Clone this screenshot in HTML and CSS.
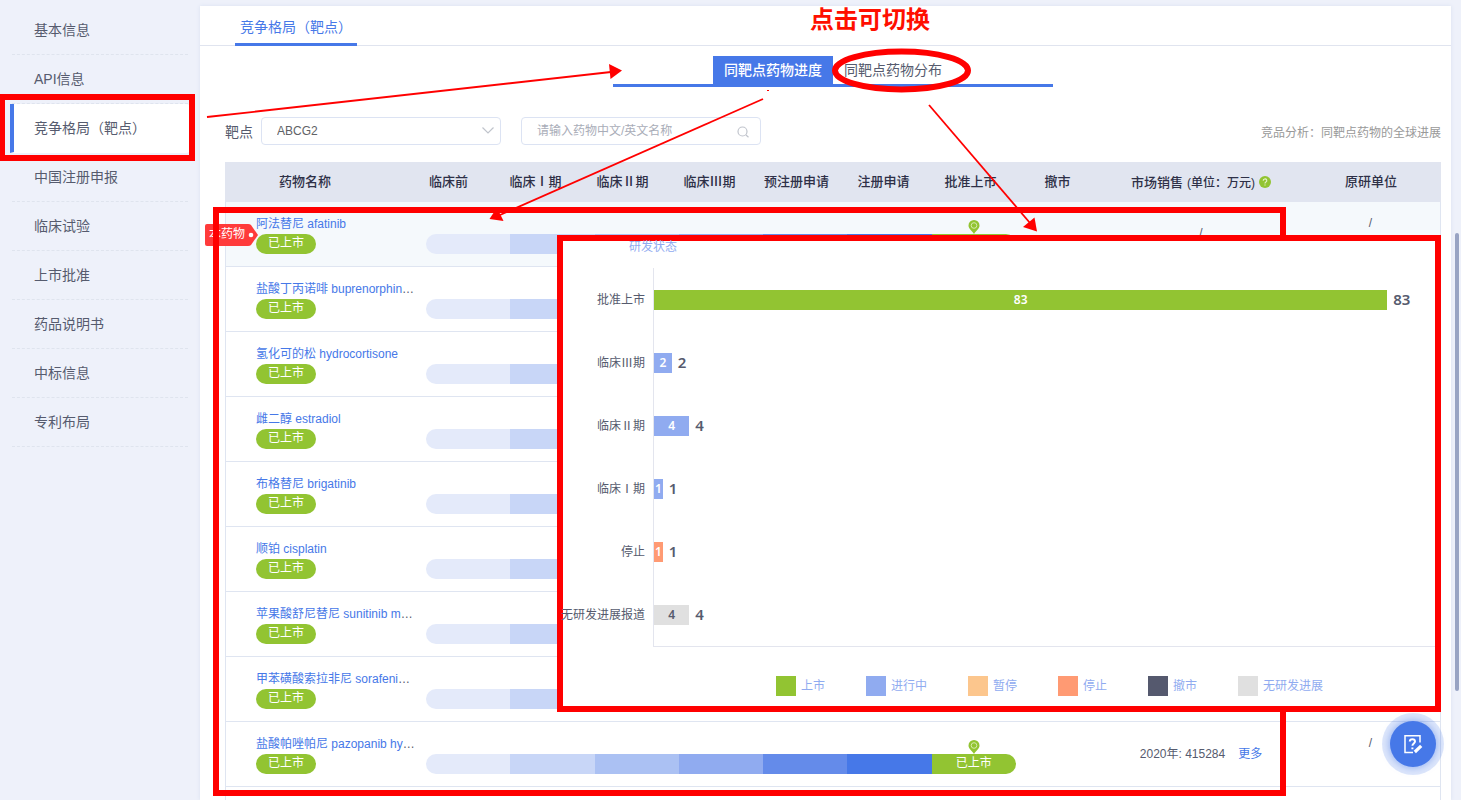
FILE: index.html
```html
<!DOCTYPE html>
<html lang="zh-CN">
<head>
<meta charset="utf-8">
<title>竞争格局（靶点）</title>
<link rel="stylesheet" href="styles.css">
</head>
<body>
<div class="page">
  <nav class="sidebar">
    <a class="side-item" href="#">基本信息</a>
    <a class="side-item" href="#">API信息</a>
    <a class="side-item side-item-active" href="#">竞争格局（靶点）</a>
    <a class="side-item" href="#">中国注册申报</a>
    <a class="side-item" href="#">临床试验</a>
    <a class="side-item" href="#">上市批准</a>
    <a class="side-item" href="#">药品说明书</a>
    <a class="side-item" href="#">中标信息</a>
    <a class="side-item" href="#">专利布局</a>
  </nav>

  <main class="main">
    <header class="main-head"><h1 class="main-tab">竞争格局（靶点）</h1></header>
    <div class="content">
      <div class="switch">
        <button class="switch-btn switch-btn-on" type="button">同靶点药物进度</button>
        <button class="switch-btn" type="button">同靶点药物分布</button>
      </div>

      <div class="filters">
        <label class="filter-label" for="target">靶点</label>
        <div class="field">
          <select id="target" class="control"><option>ABCG2</option></select>
          <svg class="field-icon" width="14" height="14" viewBox="0 0 14 14" fill="none" stroke="#c0c4cc" stroke-width="1.2"><path d="M1.500 3.500 7 9l5.500-5.500"/></svg>
        </div>
        <div class="field">
          <input id="keyword" class="control" type="text" placeholder="请输入药物中文/英文名称" aria-label="药物名称">
          <svg class="field-icon field-icon-search" width="14" height="14" viewBox="0 0 14 14" fill="none" stroke="#c0c4cc" stroke-width="1.2"><circle cx="6.500" cy="6.500" r="4.500"/><path d="m10 10 2.500 2.300"/></svg>
        </div>
        <p class="note">竞品分析：同靶点药物的全球进展</p>
      </div>

      <table class="drugs">
        <colgroup><col class="col-name"><col class="col-stage" span="8"><col class="col-sales"><col class="col-org"></colgroup>
        <thead>
          <tr>
            <th class="th-name">药物名称</th><th>临床前</th><th>临床Ⅰ期</th><th>临床Ⅱ期</th><th>临床Ⅲ期</th><th>预注册申请</th><th>注册申请</th><th>批准上市</th><th>撤市</th>
            <th><span class="th-sales">市场销售 <small class="unit">(单位：万元)</small>
              <svg width="12" height="12" viewBox="0 0 12 12"><circle cx="6" cy="6" r="6" fill="#92c432"/><path d="M4.200 4.700a1.800 1.700 0 1 1 2.700 1.400Q6 6.600 6 7.400M6 8.500v1" fill="none" stroke="#e8f4cf" stroke-width="1.100"/></svg></span></th>
            <th>原研单位</th>
          </tr>
        </thead>
        <tbody id="rows"></tbody>
      </table>
    </div>
  </main>

  <div class="scroll-thumb"></div>

  <button class="fab" type="button" aria-label="反馈">
    <svg width="20" height="20" viewBox="0 0 20 20" fill="none" stroke="#fff" stroke-width="1.500"><path d="M17 8.500V1.800H2v16.700h8"/><path d="M6.800 7.600c0-3.200 5.200-3.200 5.200 0 0 1.900-2.600 1.900-2.600 4.200M9.400 13.400v1.800" stroke-width="2"/><path d="m11.800 18 6.400-6.200" stroke-width="3.200"/></svg>
  </button>

  <div class="mark mark-menu"></div>
  <div class="mark mark-table"></div>

  <section class="chart">
    <h2 class="chart-title">研发状态</h2>
    <div class="plot" id="plot"></div>
    <ul class="legend">
      <li class="legend-item"><i class="swatch green"></i><span>上市</span></li>
      <li class="legend-item"><i class="swatch blue"></i><span>进行中</span></li>
      <li class="legend-item"><i class="swatch amber"></i><span>暂停</span></li>
      <li class="legend-item"><i class="swatch coral"></i><span>停止</span></li>
      <li class="legend-item"><i class="swatch slate"></i><span>撤市</span></li>
      <li class="legend-item"><i class="swatch gray"></i><span>无研发进展</span></li>
    </ul>
  </section>

  <svg class="arrows" width="1461" height="800" viewBox="0 0 1461 800" fill="none" stroke="#f00">
    <g stroke-width="1.800">
      <path d="M207 117 611 72"/><path d="M763 99 500 215"/><path d="m929 105 101 118"/>
    </g>
    <g fill="#f00" stroke="none">
      <path d="m609 64 13 6.500L610.500 79z"/><path d="m489.500 219 7.500-11.500 6.500 13.500z"/><path d="m1037 231.500-14-4.500 11.500-9.500z"/><path d="M767 90h2v1h-2z"/>
    </g>
    <ellipse cx="901.500" cy="70.500" rx="66.500" ry="19" stroke-width="6"/>
  </svg>
  <p class="hint">点击可切换</p>
</div>
<script src="app.js"></script>
</body>
</html>
```
FILE: styles.css
```css
* { box-sizing: border-box; }
body, h1, h2, p, ul { margin: 0; padding: 0; }
body {
  font-family: "Liberation Sans", "Noto Sans CJK SC", sans-serif;
  font-size: 14px;
  color: #565b6e;
  background: #eef1fa;
}
button, input, select { font-family: inherit; }
a { text-decoration: none; }
.page {
  position: relative;
  display: flex;
  height: 100vh;
  overflow: hidden;
}

.sidebar {
  flex: 0 0 200px;
  display: flex;
  flex-direction: column;
  padding: 6px 10px 0;
}
.side-item {
  height: 49px;
  margin: 0 2px;
  padding-left: 22px;
  line-height: 48px;
  color: #565b6e;
  border-bottom: 1px dashed #dfe4ee;
}
.side-item-active {
  margin: 0;
  padding-left: 20px;
  background: #fff;
  border-left: 4px solid #4678e8;
  border-bottom-color: #fff;
  border-radius: 0 4px 4px 0;
}

.main {
  flex: 1;
  min-width: 0;
  margin: 6px 10px 0 0;
  background: #fff;
  box-shadow: 0 0 4px #d9e0f0;
}
.main-head {
  display: flex;
  height: 40px;
  padding-left: 35px;
  border-bottom: 1px solid #e0e4ef;
}
.main-tab {
  height: 40px;
  padding: 0 5px;
  font-size: 14px;
  font-weight: 400;
  line-height: 42px;
  color: #4678e8;
  border-bottom: 3px solid #4678e8;
}
.content { padding: 10px 10px 0 25px; }
.switch {
  display: flex;
  width: 440px;
  height: 31px;
  margin: 0 auto;
  padding: 0 100px;
  border-bottom: 3px solid #4678e8;
}
.switch-btn {
  flex: 1;
  padding: 0 0 2px;
  border: 0;
  background: none;
  font-size: 14px;
  color: #565b6e;
}
.switch-btn-on { background: #4678e8; color: #fff; font-weight: 500; }

.filters {
  display: flex;
  align-items: center;
  height: 28px;
  margin: 30px 0 17px;
}
.filter-label { margin-right: 8px; }
.field { position: relative; width: 240px; margin-right: 20px; }
.control {
  width: 100%;
  height: 28px;
  padding: 0 30px 0 15px;
  border: 1px solid #dce3f3;
  border-radius: 4px;
  background: #fff;
  font-size: 12px;
  color: #606266;
  appearance: none;
}
.control::placeholder { color: #a9adb8; }
.field-icon { position: absolute; right: 6px; top: 7px; }
.field-icon-search { right: 11px; top: 8px; }
.note { margin-left: auto; font-size: 12px; color: #999; }

.drugs {
  width: 100%;
  table-layout: fixed;
  border-collapse: separate;
  border-spacing: 0;
  font-size: 12px;
}
.col-stage { width: 87px; }
.col-sales { width: 200px; }
.col-org { width: 140px; }
.drugs th {
  height: 40px;
  padding: 0 0 3px;
  font-size: 13px;
  font-weight: 500;
  color: #2e3047;
  background: #e1e5f0;
  white-space: nowrap;
}
.drugs .th-name { padding-right: 20px; }
.th-sales { display: flex; align-items: center; justify-content: center; gap: 4px; padding-top: 2px; }
.unit { font-size: 12px; }
.drugs td { height: 65px; padding: 0 0 3px; border-bottom: 1px solid #dfe5f1; text-align: center; }
.drugs td:first-child { border-left: 1px solid #dfe5f1; }
.drugs td:last-child { border-right: 1px solid #dfe5f1; }
.row-current td { background: #f5f9fc; }
.drugs .cell-name { position: relative; padding: 0 0 0 30px; text-align: left; }
.name { height: 20px; line-height: 20px; white-space: nowrap; }
.name a, .more { color: #4678e8; }
.pill {
  display: block;
  width: 60px;
  height: 20px;
  border-radius: 10px;
  background: #92c432;
  color: #fff;
  line-height: 19px;
  text-align: center;
}
.tag {
  position: absolute;
  left: -21px;
  top: 22px;
  width: 53px;
  height: 22px;
}
.tag svg { display: block; }
.tag span { position: absolute; left: 4px; top: 0; color: #fff; line-height: 21px; white-space: nowrap; }
.drugs .cell-progress { padding: 20px 85px 0 21px; }
.progress { display: flex; height: 20px; border-radius: 10px; color: #fff; line-height: 19px; }
.seg { flex: 1; }
.seg-1 { background: #e4eafa; border-radius: 10px 0 0 10px; }
.seg-2 { background: #c8d6f7; }
.seg-3 { background: #abc1f3; }
.seg-4 { background: #90abf0; }
.seg-5 { background: #648bea; }
.seg-6 { background: #4678e8; }
.seg-7 { position: relative; background: #92c432; border-radius: 0 10px 10px 0; }
.pin { position: absolute; left: 50%; bottom: 20px; margin-left: -6px; }
.more { margin-left: 13px; }
.drugs .cell-org { vertical-align: top; padding-top: 14px; }

.scroll-thumb {
  position: absolute;
  right: 2px;
  top: 233px;
  width: 4px;
  height: 458px;
  border-radius: 2px;
  background: #98a3c3;
}
.fab {
  position: absolute;
  right: 25px;
  top: 721px;
  display: flex;
  align-items: center;
  justify-content: center;
  width: 46px;
  height: 46px;
  padding: 0;
  border: 0;
  border-radius: 50%;
  background: #4678e8;
  box-shadow: 0 0 8px rgba(70, 120, 232, .6), 0 0 0 8px rgba(70, 120, 232, .18);
}

.mark { position: absolute; border: 6px solid #f00; }
.mark-menu { left: -1px; top: 94px; width: 196px; height: 67px; }
.mark-table { left: 213px; top: 207px; width: 1073px; height: 589px; }
.arrows { position: absolute; left: 0; top: 0; pointer-events: none; }
.hint {
  position: absolute;
  left: 810px;
  top: 2px;
  font-size: 24px;
  font-weight: 700;
  line-height: 35px;
  color: #ff0f00;
}

.chart {
  position: absolute;
  left: 557px;
  top: 235px;
  width: 884px;
  height: 477px;
  border: 6px solid #f00;
  background: #fff;
  font-size: 12px;
}
.chart-title {
  width: 180px;
  font-size: 12px;
  font-weight: 400;
  line-height: 12px;
  text-align: center;
  color: #90abf0;
}
.plot { margin: 15px 0 0 90px; border-left: 1px solid #e3e5ee; border-bottom: 1px solid #e3e5ee; }
.bar-row { position: relative; display: flex; align-items: center; height: 63px; }
.bar-label { position: absolute; right: 100%; margin-right: 9px; padding-bottom: 2px; white-space: nowrap; }
.bar {
  height: 20px;
  line-height: 19px;
  text-align: center;
  color: #fff;
  font-family: "Noto Sans", sans-serif;
  font-weight: 600;
}
.total { margin-left: 6px; padding-bottom: 2px; font-family: "Noto Sans", sans-serif; font-size: 15px; font-weight: 600; }
.legend {
  display: flex;
  gap: 41px;
  padding: 29px 0 0 213px;
  list-style: none;
  color: #90abf0;
  white-space: nowrap;
}
.legend-item { display: flex; align-items: center; gap: 5px; }
.legend-item span { padding-bottom: 3px; }
.swatch { width: 20px; height: 20px; }
.green { background: #92c432; }
.blue { background: #90abf0; }
.amber { background: #fcc68d; }
.coral { background: #ff9a73; }
.slate { background: #55596e; }
.gray { background: #e0e0e0; }
.bar.gray { color: #565b6e; }
```
FILE: app.js
```js
const drugs = [
  ["阿法替尼 afatinib", false],
  ["盐酸丁丙诺啡 buprenorphin", true],
  ["氢化可的松 hydrocortisone", false],
  ["雌二醇 estradiol", false],
  ["布格替尼 brigatinib", false],
  ["顺铂 cisplatin", false],
  ["苹果酸舒尼替尼 sunitinib m", true],
  ["甲苯磺酸索拉非尼 sorafeni", true],
  ["盐酸帕唑帕尼 pazopanib hy", true, "2020年: 415284"],
  ["", false]
];
const pin = '<svg class="pin" width="12" height="14" viewBox="0 0 12 14"><path d="M6 0a5.500 5.500 0 0 1 5.500 5.500C11.500 9 8 10.500 6 14 4 10.500.5 9 .5 5.500A5.500 5.500 0 0 1 6 0z" fill="#92c432"/><circle cx="6" cy="5.500" r="2.800" fill="none" stroke="#d6eaae"/></svg>';
const tag = '<div class="tag"><svg width="53" height="22" viewBox="0 0 53 22"><path d="M2 0h41q2 0 3 1l7 10-7 10q-1 1-3 1H2q-2 0-2-2V2q0-2 2-2z" fill="#ff3b3b"/><circle cx="46" cy="11" r="2.300" fill="#fff"/></svg><span>本药物</span></div>';
const segs = [1, 2, 3, 4, 5, 6].map(n => `<div class="seg seg-${n}"></div>`).join("");

document.getElementById("rows").innerHTML = drugs.map(([name, cut, sales], i) => name ? `
  <tr class="${i === 0 ? "row-current" : ""}">
    <td class="cell-name"><div class="name"><a href="#">${name}</a>${cut ? "…" : ""}</div><span class="pill">已上市</span>${i === 0 ? tag : ""}</td>
    <td class="cell-progress" colspan="8"><div class="progress">${segs}<div class="seg seg-7">已上市${pin}</div></div></td>
    <td>${sales ? sales + '<a class="more" href="#">更多</a>' : "/"}</td>
    <td class="cell-org">/</td>
  </tr>` : '<tr><td></td><td colspan="8"></td><td></td><td></td></tr>').join("");

const stages = [
  ["批准上市", 83, "green"],
  ["临床Ⅲ期", 2, "blue"],
  ["临床Ⅱ期", 4, "blue"],
  ["临床Ⅰ期", 1, "blue"],
  ["停止", 1, "coral"],
  ["无研发进展报道", 4, "gray"]
];
const axisMax = 88.4;
document.getElementById("plot").innerHTML = stages.map(([label, n, color]) => `
  <div class="bar-row"><span class="bar-label">${label}</span><div class="bar ${color}" style="width:${n / axisMax * 100}%">${n}</div><span class="total">${n}</span></div>`).join("");
```
